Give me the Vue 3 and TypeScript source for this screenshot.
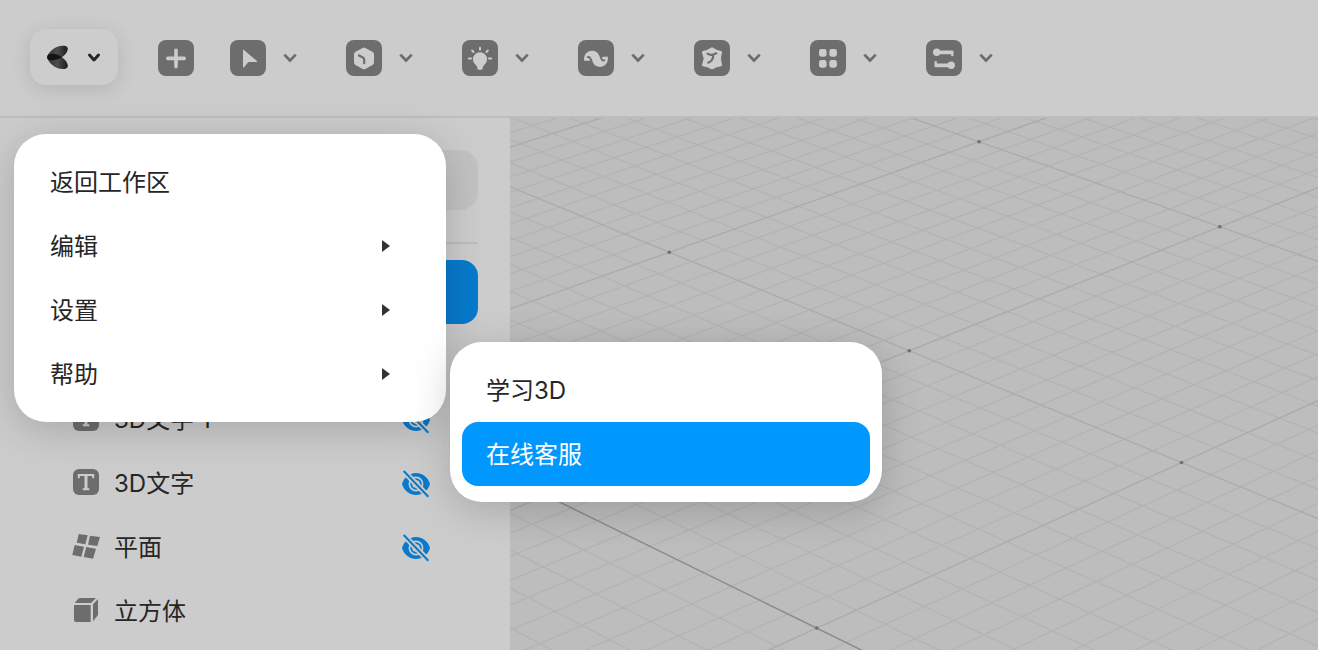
<script setup lang="ts">
import { ref } from 'vue'

type IconName = 'cube' | 'plane' | 'text'
interface Layer { id: number; name: string; icon?: IconName; hidden?: boolean; selected?: boolean }
interface MenuItem { label: string; children?: string[] }
interface Segment { d: string; kind: string }

const tools = [
  { id: 'select', label: '选择' },
  { id: 'shape', label: '形状' },
  { id: 'light', label: '灯光' },
  { id: 'curve', label: '曲线' },
  { id: 'cloth', label: '布料' },
  { id: 'array', label: '阵列' },
  { id: 'link', label: '连接' },
]

const layers: Layer[] = [
  { id: 1, name: '', selected: true },
  { id: 2, name: '' },
  { id: 3, name: '3D文字 1', icon: 'text', hidden: true },
  { id: 4, name: '3D文字', icon: 'text', hidden: true },
  { id: 5, name: '平面', icon: 'plane', hidden: true },
  { id: 6, name: '立方体', icon: 'cube' },
]

const menu: MenuItem[] = [
  { label: '返回工作区' },
  { label: '编辑', children: [] },
  { label: '设置', children: [] },
  { label: '帮助', children: ['学习3D', '在线客服'] },
]
const openItem = ref('帮助')
const activeSub = ref('在线客服')
const query = ref('')

// Perspective projection of the ground plane into the viewport.
function depth(i: number, j: number): number {
  return 1 - 0.0592 * i + 0.073 * j
}
function project(i: number, j: number): [number, number] {
  const w = depth(i, j)
  return [
    (186.17 * i + 381.2 * j + 669.3) / w - 510,
    (77.8 * i - 100.1 * j + 252.2) / w - 118,
  ]
}
function segment(i0: number, j0: number, i1: number, j1: number): string {
  const a = project(i0, j0)
  const b = project(i1, j1)
  return `M${a[0].toFixed(1)} ${a[1].toFixed(1)}L${b[0].toFixed(1)} ${b[1].toFixed(1)}`
}

const minor: Segment[] = []
const major: Segment[] = []
for (let n = -80; n <= 60; n++) {
  const i = n / 10
  const kind = n % 10 === 0 ? 'major' : 'minor'
  ;(n % 10 === 0 ? major : minor).push({ d: segment(i, -4, i, 10), kind })
}
for (let n = -40; n <= 100; n++) {
  const j = n / 10
  const kind = n === -10 ? 'axis' : n % 10 === 0 ? 'major' : 'minor'
  ;(n % 10 === 0 ? major : minor).push({ d: segment(-8, j, 6, j), kind })
}
const gridLines = [...minor, ...major]
const gridDots = [[0, 0], [1, 0], [2, 0], [0, 1], [1, 1], [2, -1]].map(([i, j]) => project(i, j))
</script>

<template>
  <div class="app">
    <header class="toolbar">
      <button class="brand" type="button" aria-label="主菜单">
        <svg width="24" height="24" viewBox="0 0 24 24">
          <defs>
            <linearGradient id="petal" x1="0" x2="1">
              <stop offset="0" stop-color="#333" />
              <stop offset=".5" stop-color="#4c4c4c" />
              <stop offset="1" stop-color="#1c1c1c" />
            </linearGradient>
            <clipPath id="upper"><path d="M1 13C2 7 9 .7 17 .7C21 .7 22.500 2.500 21.500 5.500C20.500 9 16 13 11 14.500C7 15.600 1.500 16 1 13Z" /></clipPath>
          </defs>
          <path d="M1 13C2 7 9 .7 17 .7C21 .7 22.500 2.500 21.500 5.500C20.500 9 16 13 11 14.500C7 15.600 1.500 16 1 13Z" fill="url(#petal)" />
          <path d="M1 11.700C2 17.500 9 24 17 24C21 24 22.500 22 21.500 19C20.500 15.500 16 11.500 11 9.500C7 8.200 1.500 8.500 1 11.700Z" fill="url(#petal)" />
          <g clip-path="url(#upper)"><path d="M1 11.700C2 17.500 9 24 17 24C21 24 22.500 22 21.500 19C20.500 15.500 16 11.500 11 9.500C7 8.200 1.500 8.500 1 11.700Z" fill="#141414" /></g>
        </svg>
        <svg class="brand-arrow" width="16" height="12" viewBox="0 0 16 12"><path d="M3.500 4 8 8.900 12.500 4" /></svg>
      </button>

      <div class="tools">
        <button class="tool add" type="button" aria-label="添加">
          <svg width="36" height="36" viewBox="0 0 36 36"><path class="line" stroke-width="3.6" d="M9.8 18.4H26.2M18 10.2V26.6" /></svg>
        </button>
        <div v-for="t in tools" :key="t.id" class="group">
          <button class="tool" type="button" :aria-label="t.label">
            <svg width="36" height="36" viewBox="0 0 36 36">
              <path v-if="t.id === 'select'" class="solid" d="M13 10.3C13 9.7 13.5 9.6 14 10L27 21C27.5 21.6 27.3 22 26.6 22H19.8C18.7 22 18.2 22.3 17.5 23L14 27.2C13.5 27.8 13 27.6 13 27Z" />
              <template v-else-if="t.id === 'shape'">
                <path class="solid" d="M16.6 7.9Q18 7.1 19.4 7.9L26.4 11.7Q28 12.5 28 14.2V22.6Q28 24.2 26.4 25.1L19.4 28.9Q18 29.6 16.6 28.9L9.6 25.1Q8 24.2 8 22.6V14.2Q8 12.5 9.6 11.7Z" />
                <path class="ink" d="M13 15.5 16.8 17.5Q18.2 18.2 18.2 19.6V23.2" />
              </template>
              <template v-else-if="t.id === 'light'">
                <path class="solid" d="M18 12.2a7 7 0 0 1 7 7c0 2.8-1.5 4.5-3 6-.8.8-1.2 1.500-1.300 2.500-.1 1.400-.6 2.100-1.500 2.100h-2.400c-.9 0-1.400-.7-1.500-2.100-.1-1-.5-1.700-1.300-2.500-1.500-1.500-3-3.200-3-6a7 7 0 0 1 7-7Z" />
                <path class="line" stroke-width="2" d="M18 7.700V9.500M6.800 18.400H9M27 18.400H29.200M10.200 10.600 11.500 12M25.800 10.600 24.500 12" />
              </template>
              <path v-else-if="t.id === 'curve'" class="solid" d="M6.200 20.700C5.300 15 9 10.800 14 10.800C18.500 10.800 20.500 13.300 21.600 16.500C22.600 19.700 23.800 21.500 25.700 21.500C27.300 21.500 27.800 19.600 26.600 19.500C25 19.800 23.900 18.700 24.100 17.500C24.400 16.300 25.500 16.700 27 16.800Q28.500 16.800 29.800 16.400C30.700 22.300 27 26.800 22 26.800C17.500 26.800 15.500 24.300 14.400 21C13.400 17.800 12.200 16.100 10.300 16.100C8.700 16.100 8.200 18 9.400 18.100C11 17.800 12.100 18.900 11.900 20.100C11.600 21.300 10.500 20.900 9 20.800Q7.500 20.800 6.200 20.700Z" />
              <template v-else-if="t.id === 'cloth'">
                <path class="solid" d="M9 11Q13.500 10.100 17 7.700Q18 7 19 7.700Q22.500 10.100 27 11Q28.200 11.300 28 12.500L26.900 18.500L28 24.700Q28.200 25.900 27 26.200Q22.500 26.800 19 28.900Q18 29.500 17 28.900Q13.500 26.800 9 26.200Q7.800 25.900 8 24.700L9.700 18.500L8 12.500Q7.800 11.300 9 11Z" />
                <path class="ink" d="M13.500 13.700Q16 15.400 18.500 14.700Q21 14 22.300 13.300M19.200 14.600C19.400 18.500 17.500 21.500 14.200 22.700" />
              </template>
              <g v-else-if="t.id === 'array'" class="solid">
                <rect x="9" y="9" width="7.600" height="7.700" rx="2.400" /><rect x="19.300" y="9" width="7.600" height="7.700" rx="2.400" />
                <rect x="9" y="20" width="7.600" height="7.700" rx="2.400" /><rect x="19.300" y="20" width="7.600" height="7.700" rx="2.400" />
              </g>
              <g v-else class="solid">
                <circle cx="10.700" cy="12.300" r="3.700" /><circle cx="25.200" cy="25.300" r="3.700" />
                <path d="M11 10.500H26.500Q27.500 10.500 27.500 11.500V15.500Q27.500 16.300 26.300 16.300T25.100 15.500V14.200H11ZM25 27.200H9.500Q8.500 27.200 8.500 26.200V21.700Q8.500 20.900 9.700 20.900T10.900 21.700V23.500H25Z" />
              </g>
            </svg>
          </button>
          <button class="more" type="button" :aria-label="t.label + '选项'">
            <svg width="16" height="12" viewBox="0 0 16 12"><path d="M3.200 3.500 8 8.500 12.800 3.500" /></svg>
          </button>
        </div>
      </div>
    </header>

    <div class="body">
      <aside class="sidebar">
        <input v-model="query" class="search" type="search" aria-label="搜索">
        <hr class="divider">
        <ul class="layers">
          <li v-for="l in layers" :key="l.id" class="layer" :class="{ selected: l.selected }">
            <svg v-if="l.icon" width="28" height="32" viewBox="0 0 28 32" class="layer-icon">
              <template v-if="l.icon === 'text'">
                <rect x="1" y="1" width="26" height="26" rx="6" />
                <path class="tee" stroke-width="2" d="M6.800 10.200V7H21.200V10.200M10.700 21.300H17.300" />
                <path class="tee" stroke-width="3" d="M14 7V21" />
              </template>
              <path v-else-if="l.icon === 'plane'" d="M6.700 2 15.700 3.300 13.300 12.300 4.700 10.700ZM18 3.700 28 5 25.300 14 16 12.700ZM2.700 13 12 14.700 9.300 24.700.300 23ZM14.300 15 24 16.700 21 26.700 11.700 25Z" />
              <path v-else d="M2 9H18.700V26H4Q2 26 2 24ZM2.700 7 6 3Q7 2 8.500 2H24L19 7ZM21 8.300 26 3V18Q26 19 25.400 19.800L21 25.300Z" />
            </svg>
            <span class="layer-name">{{ l.name }}</span>
            <button v-if="l.hidden" class="eye" type="button" aria-label="显示图层">
              <svg width="28" height="28" viewBox="0 0 28 28">
                <path fill="#077acc" d="M0 14C2.500 6.500 8 3 14 3S25.500 6.500 28 14C25.500 21.500 20 25 14 25S2.500 21.500 0 14Z" />
                <circle class="gap" cx="14" cy="14" r="6.600" stroke-width="1.700" />
                <circle class="gap" cx="14" cy="14" r="3" stroke-width="1.500" />
                <path class="gap" stroke-width="5.600" d="M0 -.600 28 28.400" />
                <path fill="none" stroke="#077acc" stroke-width="2" d="M1.700 1 26.300 26.700" />
              </svg>
            </button>
          </li>
        </ul>
      </aside>

      <main class="viewport">
        <svg class="grid" aria-hidden="true">
          <path v-for="(g, n) in gridLines" :key="n" :class="g.kind" :d="g.d" />
          <circle v-for="(p, n) in gridDots" :key="'d' + n" :cx="p[0]" :cy="p[1]" r="1.800" />
        </svg>
      </main>
    </div>

    <nav class="menu main-menu" aria-label="主菜单">
      <div v-for="m in menu" :key="m.label" class="entry">
        <button class="item" type="button" @click="openItem = m.label">
          <span class="item-label">{{ m.label }}</span>
          <svg v-if="m.children" width="8" height="12" viewBox="0 0 8 12"><path d="M0 0 8 6 0 12Z" fill="#333" /></svg>
        </button>
        <div v-if="openItem === m.label && m.children?.length" class="menu submenu">
          <button v-for="c in m.children" :key="c" class="item" :class="{ active: c === activeSub }" type="button" @click="activeSub = c">
            <span class="item-label">{{ c }}</span>
          </button>
        </div>
      </div>
    </nav>
  </div>
</template>

<style>
body { background: #ccc; }
</style>

<style scoped>
* { box-sizing: border-box; }
button { border: 0; padding: 0; background: none; font: inherit; color: inherit; cursor: pointer; }
svg { display: block; flex: none; }
.app {
  position: relative;
  display: flex;
  flex-direction: column;
  height: 100vh;
  overflow: hidden;
  background: #ccc;
  color: #262626;
  font: 24px/32px Inter, "Noto Sans CJK SC", sans-serif;
}
.toolbar {
  display: flex;
  align-items: flex-start;
  flex: none;
  gap: 40px;
  height: 118px;
  padding: 29px 30px;
  border-bottom: 2px solid #bdbdbd;
}
.brand {
  display: flex;
  align-items: center;
  gap: 16px;
  flex: none;
  width: 88px;
  height: 56px;
  padding-left: 16px;
  border-radius: 16px;
  background: #cdcdcd;
  box-shadow: 0 4px 20px rgba(0, 0, 0, .12);
}
.brand-arrow path, .more path { fill: none; stroke: #262626; stroke-width: 3; stroke-linecap: round; stroke-linejoin: round; }
.more path { stroke: #6d6d6d; stroke-width: 2.6; stroke-linecap: square; stroke-linejoin: miter; }
.tools { display: flex; align-items: center; gap: 32px; height: 58px; }
.tool { width: 36px; height: 36px; border-radius: 8px; background: #6d6d6d; }
.add { margin-right: 4px; }
.group { display: flex; align-items: center; }
.more { display: flex; justify-content: center; width: 48px; }
.solid { fill: #ccc; }
.line { fill: none; stroke: #ccc; stroke-linecap: round; }
.ink { fill: none; stroke: #6d6d6d; stroke-width: 2.2; stroke-linecap: round; }

.body { display: flex; flex: 1; min-height: 0; }
.sidebar { flex: none; width: 510px; padding: 32px; overflow: hidden; }
.search { display: block; width: 100%; height: 60px; padding: 0 24px; border: 0; border-radius: 18px; background: #c2c2c2; font: inherit; appearance: none; }
.divider { height: 2px; margin: 32px 0 16px; border: 0; background: #bdbdbd; }
.layers { margin: 0; padding: 0; list-style: none; }
.layer { display: flex; align-items: center; gap: 14px; height: 64px; padding: 0 48px 0 40px; border-radius: 16px; }
.selected { background: #077acc; }
.layer-icon { fill: #6d6d6d; }
.layer-name { flex: 1; }
.tee { fill: none; stroke: #ccc; }
.gap { fill: none; stroke: #ccc; }

.viewport { position: relative; flex: 1; min-width: 0; overflow: hidden; background: #bdbdbd; }
.grid { position: absolute; inset: 0; width: 100%; height: 100%; fill: none; }
.minor { stroke: #b3b3b3; stroke-width: 1.2; }
.major { stroke: #acacac; stroke-width: 1.5; }
.axis { stroke: #8c8c8c; stroke-width: 1.5; }
.grid circle { fill: #707070; }

.menu { position: absolute; width: 432px; padding: 16px 12px; border-radius: 32px; background: #fff; box-shadow: 0 8px 40px rgba(0, 0, 0, .18); }
.main-menu { top: 134px; left: 14px; }
.entry { position: relative; }
.item { display: flex; align-items: center; justify-content: space-between; width: 100%; height: 64px; padding: 0 44px 0 24px; border-radius: 16px; text-align: left; }
.item-label { padding-top: 2px; }
.submenu { top: 0; left: 424px; }
.active { background: #0098ff; color: #fff; }
</style>
